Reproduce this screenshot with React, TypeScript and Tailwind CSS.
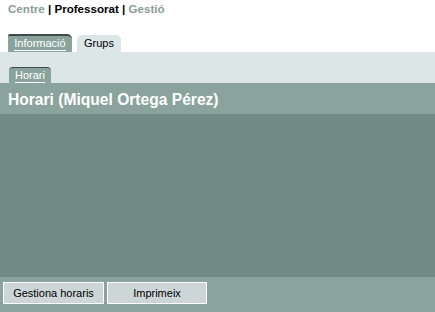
export default function App() {
    return (
        <div
            className="w-[435px] h-[312px] flex flex-col bg-white overflow-hidden"
            style={{ fontFamily: '"Liberation Sans", Arial, sans-serif' }}
        >
            {/* top nav */}
            <div className="h-[19px] px-2 pt-[2px] text-[11.6px] font-bold leading-[14px] text-black">
                <span className="text-[#8a9c98]">Centre</span> | Professorat |{" "}
                <span className="text-[#8a9c98]">Gestió</span>
            </div>

            {/* main tabs */}
            <div className="h-[33px] flex items-end gap-[5px] pl-2">
                <div className="h-[18px] w-[64px] bg-[#8aa39d] border-t-2 border-[#3d4a47] rounded-tr-[5px] rounded-tl-[2px] flex items-start justify-center pt-[1px]">
                    <span className="text-[11px] leading-[13px] text-white border-b border-white">
                        Informació
                    </span>
                </div>
                <div className="h-[17px] w-[44px] bg-[#dde6e7] rounded-t-[5px] flex items-start justify-center pt-[2px]">
                    <span className="text-[11px] leading-[13px] text-black">Grups</span>
                </div>
            </div>

            {/* sub tabs band */}
            <div className="h-[31px] bg-[#dde6e7] flex items-end pl-[9px]">
                <div className="h-[16px] w-[42px] bg-[#8aa39d] border-t border-[#3d4a47] rounded-t-[4px] flex items-start justify-center pt-[1px]">
                    <span className="text-[11px] leading-[13px] text-white border-b border-white">
                        Horari
                    </span>
                </div>
            </div>

            {/* header */}
            <div className="h-[31px] bg-[#8aa39d] flex items-center px-2 pt-[3px]">
                <h1 className="text-[15.6px] font-bold text-white leading-none">
                    Horari (Miquel Ortega Pérez)
                </h1>
            </div>

            {/* content */}
            <div className="flex-1 bg-[#728a84]" />

            {/* footer */}
            <div className="h-[35px] bg-[#8aa39d] flex items-start gap-[3px] pl-[3px] pt-[5px]">
                <button className="h-[22px] w-[101px] bg-[#ccd6d7] border border-white text-[11px] text-black">
                    Gestiona horaris
                </button>
                <button className="h-[22px] w-[100px] bg-[#ccd6d7] border border-white text-[11px] text-black">
                    Imprimeix
                </button>
            </div>
        </div>
    );
}
